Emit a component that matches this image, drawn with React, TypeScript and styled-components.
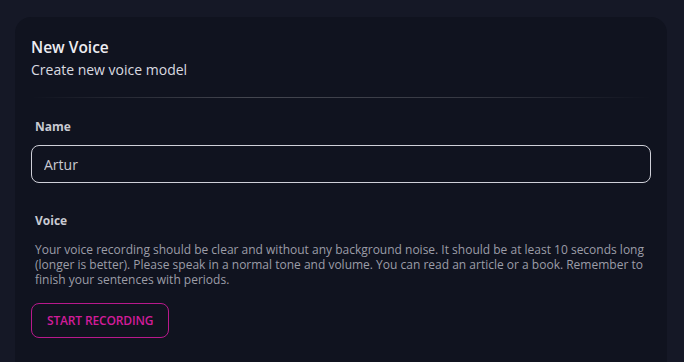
import styled, { createGlobalStyle } from "styled-components";

const GlobalStyle = createGlobalStyle`
  html, body {
    margin: 0;
    padding: 0;
    background-color: #151826;
    font-family: "Open Sans", "Noto Sans", sans-serif;
    overflow: hidden;
  }
`;

const Page = styled.div`
  display: flex;
  flex-direction: column;
  padding: 17px 17px 0 15px;
  height: 100vh;
  box-sizing: border-box;
`;

const Card = styled.div`
  flex: 1;
  background-color: #10131f;
  border-radius: 16px 16px 0 0;
  padding: 20px 16px 0 16px;
  box-sizing: border-box;
`;

const Title = styled.div`
  color: #ededf2;
  font-size: 15.5px;
  font-weight: 600;
  line-height: 20px;
`;

const Subtitle = styled.div`
  color: #d9dae0;
  font-size: 14px;
  line-height: 20px;
  margin-top: 3px;
`;

const Divider = styled.div`
  height: 1px;
  margin: 17px 0 21px;
  background: linear-gradient(
    to right,
    rgba(255, 255, 255, 0) 0%,
    rgba(255, 255, 255, 0.22) 35%,
    rgba(255, 255, 255, 0.16) 70%,
    rgba(255, 255, 255, 0) 100%
  );
`;

const Label = styled.div<{ $gap?: number }>`
  color: #c9cad2;
  font-size: 12px;
  font-weight: 700;
  line-height: 16px;
  padding-left: 4px;
  margin-bottom: ${(p) => p.$gap ?? 10}px;
`;

const Input = styled.input`
  display: block;
  width: 100%;
  height: 38px;
  box-sizing: border-box;
  background: transparent;
  border: 1px solid #cfd0d8;
  border-radius: 8px;
  padding: 0 12px;
  color: #c9cad2;
  font-family: inherit;
  font-size: 14px;
  outline: none;
`;

const Section = styled.div`
  margin-top: 30px;
`;

const Description = styled.p`
  margin: 0;
  padding-left: 4px;
  color: #9c9da8;
  font-size: 12px;
  line-height: 15px;
`;

const RecordButton = styled.button`
  margin-top: 16px;
  height: 35px;
  padding: 0 15px;
  background: transparent;
  border: 1px solid #b8198c;
  border-radius: 8px;
  color: #d01c99;
  font-family: inherit;
  font-size: 12px;
  font-weight: 650;
  letter-spacing: -0.15px;
  text-transform: uppercase;
  cursor: pointer;
`;

export default function App() {
  return (
    <>
      <GlobalStyle />
      <Page>
        <Card>
          <Title>New Voice</Title>
          <Subtitle>Create new voice model</Subtitle>
          <Divider />
          <Label>Name</Label>
          <Input defaultValue="Artur" />
          <Section>
            <Label $gap={13}>Voice</Label>
            <Description>
              Your voice recording should be clear and without any background
              noise. It should be at least 10 seconds long (longer is better).
              Please speak in a normal tone and volume. You can read an article
              or a book. Remember to finish your sentences with periods.
            </Description>
            <RecordButton>Start recording</RecordButton>
          </Section>
        </Card>
      </Page>
    </>
  );
}
